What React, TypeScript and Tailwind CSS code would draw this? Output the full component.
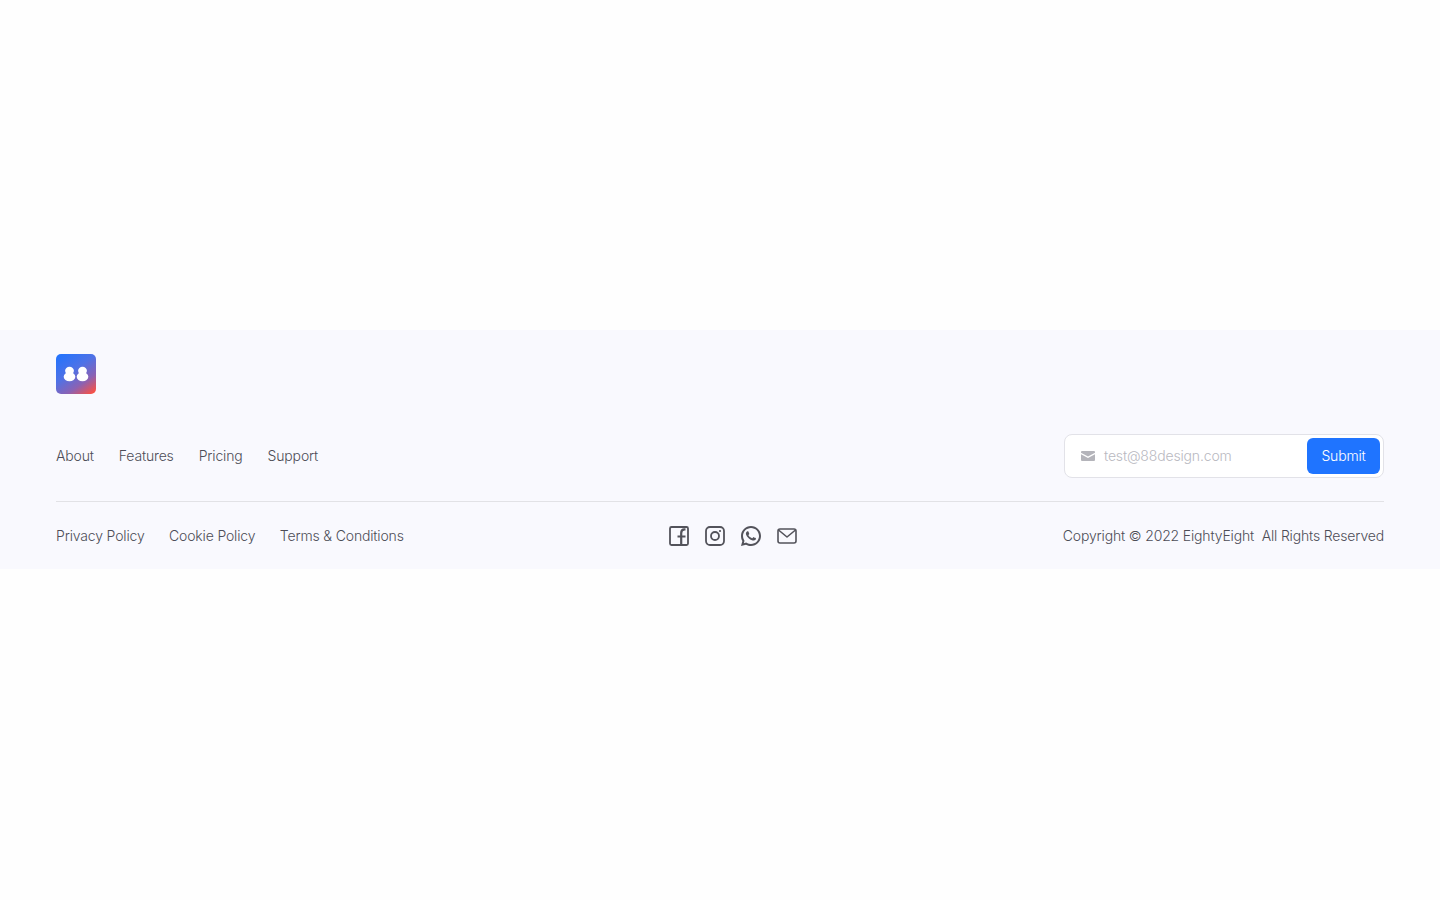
import React from "react";
import { RiWhatsappLine } from "react-icons/ri";

const Logo = () => (
  <div className="flex h-10 w-10 items-center justify-center rounded-[5px] bg-[linear-gradient(145deg,#1f74ff_0%,#4f72e6_42%,#8a62b4_70%,#f4524a_94%)]">
    <svg width="26" height="16" viewBox="0 0 26 16" fill="#fff">
      <ellipse cx="6.5" cy="4.8" rx="4.4" ry="4" />
      <ellipse cx="6.5" cy="10.8" rx="5.8" ry="4.5" />
      <ellipse cx="19.5" cy="4.8" rx="4.4" ry="4" />
      <ellipse cx="19.5" cy="10.8" rx="5.8" ry="4.5" />
    </svg>
  </div>
);

const FacebookIcon = () => (
  <svg width="22" height="22" viewBox="0 0 22 22" fill="none" stroke="#53535b" strokeWidth="1.8">
    <rect x="2" y="2" width="18" height="18" rx="1.5" />
    <path d="M13.2 20V8C13.2 5.6 14.4 4.4 16.5 4.4H17.5M9.5 11.5h8" strokeWidth="2.2" />
  </svg>
);

const InstagramIcon = () => (
  <svg width="22" height="22" viewBox="0 0 22 22" fill="none" stroke="#53535b" strokeWidth="1.8">
    <rect x="2" y="2" width="18" height="18" rx="4" />
    <circle cx="11" cy="11" r="4" />
    <circle cx="16" cy="6" r="1.1" fill="#53535b" stroke="none" />
  </svg>
);

const MailIcon = () => (
  <svg width="22" height="22" viewBox="0 0 22 22" fill="none" stroke="#53535b" strokeWidth="1.6" strokeLinejoin="round">
    <rect x="2" y="4" width="18" height="14" rx="2" />
    <path d="M2.5 5 11 12l8.5-7" />
  </svg>
);

const SmallMail = () => (
  <svg width="14" height="10" viewBox="0 0 14 10" fill="#b4b4ba">
    <path d="M1 0h12a1 1 0 0 1 1 1v.8L7 5.6 0 1.8V1a1 1 0 0 1 1-1Z" />
    <path d="M0 3.2 7 7l7-3.8V9a1 1 0 0 1-1 1H1a1 1 0 0 1-1-1Z" />
  </svg>
);

export default function App() {
  return (
    <div className="min-h-[900px] bg-[#fefefe] font-['Inter',sans-serif] text-sm font-light tracking-[-0.16px] text-[#4d4d57]">
      <div className="h-[330px]" />
      <footer className="h-[239px] bg-[#f9f9fe] px-14 pt-6">
        <Logo />
        <div className="mt-10 flex items-center justify-between border-b border-[#e2e2e6] pb-[23px]">
          <nav className="flex gap-[25px]">
            <a>About</a>
            <a>Features</a>
            <a>Pricing</a>
            <a>Support</a>
          </nav>
          <div className="flex h-11 w-[320px] items-center rounded-lg border border-[#e2e2e8] bg-white pl-4 pr-[3px]">
            <SmallMail />
            <span className="ml-[9px] flex-1 text-[#b9b9bf]">test@88design.com</span>
            <button className="h-9 w-[73px] rounded-md bg-[#1f74ff] text-white">Submit</button>
          </div>
        </div>
        <div className="mt-[22px] flex items-center justify-between">
          <nav className="flex gap-[24.5px]">
            <a>Privacy Policy</a>
            <a>Cookie Policy</a>
            <a>Terms &amp; Conditions</a>
          </nav>
          <div className="mr-px flex items-center gap-[14px]">
            <FacebookIcon />
            <InstagramIcon />
            <RiWhatsappLine size={24} color="#53535b" className="-mx-px" />
            <MailIcon />
          </div>
          <p className="whitespace-pre">Copyright © 2022 EightyEight  All Rights Reserved</p>
        </div>
      </footer>
    </div>
  );
}
